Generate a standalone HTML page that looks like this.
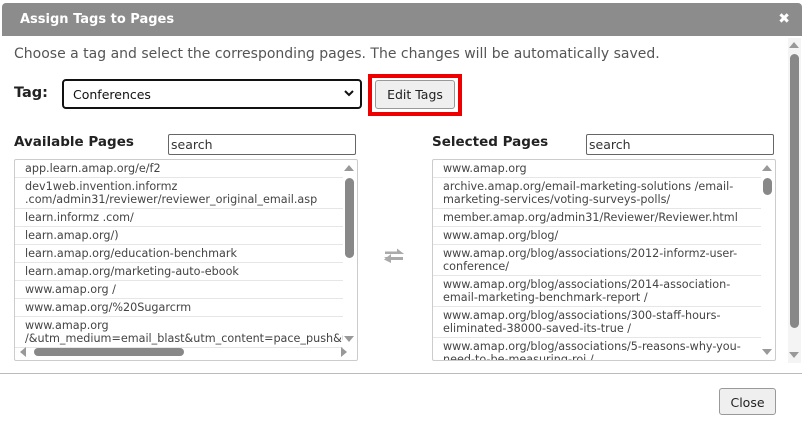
<!DOCTYPE html>
<html><head><style>
*{box-sizing:border-box;margin:0;padding:0}
body{width:804px;height:433px;background:#fff;font-family:"DejaVu Sans","Liberation Sans",sans-serif;position:relative;overflow:hidden;color:#333}
.title{position:absolute;left:2px;top:3px;width:800px;height:33px;background:#8c8c8c;border-radius:4px 4px 0 0;color:#fff;font-weight:bold;font-size:13px;padding:9px 0 0 18px}
.x{position:absolute;right:12px;top:8px;font-size:14px}
.abs{position:absolute}
.desc{left:14px;top:46px;font-size:14px;color:#555;white-space:nowrap}
.lbl{font-weight:bold;font-size:13.5px;color:#222}
.sel{left:62px;top:79px;width:300px;height:30px;border:2px solid #111;border-radius:4px;font-size:12.5px;padding:6px 0 0 9px;color:#111}
.red{left:368px;top:74px;width:94px;height:42px;border:4px solid #e00}
.btn{background:#efefef;border:1px solid #999;border-radius:3px;font-size:12.5px;color:#222;text-align:center}
.search{height:21px;border:1px solid #666;border-radius:2px;font-size:12.5px;padding:2px 0 0 2px;color:#333}
.list{border:1px solid #ccc;border-radius:2px;overflow:hidden;background:#fff}
.row{border-bottom:1px solid #e6e6e6;font-size:11.2px;line-height:13px;padding:2px 0 2px 10px;white-space:nowrap;color:#444;height:18px}
.row.d{height:31px}
.vs{position:absolute;right:3px;width:9px;border-radius:5px;background:#888}
.tri{position:absolute;width:0;height:0;border-left:5px solid transparent;border-right:5px solid transparent}
</style></head><body>
<div class="title">Assign Tags to Pages<span class="x">✖</span></div>
<div class="abs desc">Choose a tag and select the corresponding pages. The changes will be automatically saved.</div>
<div class="abs lbl" style="left:14px;top:85px;font-size:14.5px">Tag:</div>
<div class="abs sel">Conferences<svg style="position:absolute;right:6px;top:9px" width="10" height="7"><path d="M1 1l4 4 4-4" stroke="#111" stroke-width="2" fill="none"/></svg></div>
<div class="abs red"></div>
<div class="abs btn" style="left:375px;top:80px;width:80px;height:29px;padding-top:6px">Edit Tags</div>
<div class="abs lbl" style="left:14px;top:134px">Available Pages</div>
<div class="abs search" style="left:168px;top:134px;width:188px">search</div>
<div class="abs lbl" style="left:432px;top:134px">Selected Pages</div>
<div class="abs search" style="left:586px;top:134px;width:188px">search</div>

<div class="abs list" style="left:14px;top:159px;width:344px;height:202px">
<div style="width:328px;overflow:hidden">
<div class="row">app.learn.amap.org/e/f2</div>
<div class="row d">dev1web.invention.informz<br>.com/admin31/reviewer/reviewer_original_email.asp</div>
<div class="row">learn.informz .com/</div>
<div class="row">learn.amap.org/)</div>
<div class="row">learn.amap.org/education-benchmark</div>
<div class="row">learn.amap.org/marketing-auto-ebook</div>
<div class="row">www.amap.org /</div>
<div class="row">www.amap.org/%20Sugarcrm</div>
<div class="row d" style="overflow:hidden">www.amap.org<br>/&amp;utm_medium=email_blast&amp;utm_content=pace_push&amp;utm</div>
</div>
<div class="vs" style="top:18px;height:80px"></div>
<div class="tri" style="right:3px;top:5px;border-bottom:6px solid #999"></div>
<div class="tri" style="right:3px;top:176px;border-top:6px solid #999"></div>
<div style="position:absolute;left:19px;top:188px;width:150px;height:8px;border-radius:4px;background:#888"></div>
<div class="tri" style="left:5px;top:187px;border:5px solid transparent;border-right:6px solid #999;border-left:0"></div>
<div class="tri" style="left:326px;top:187px;border:5px solid transparent;border-left:6px solid #999;border-right:0"></div>
</div>

<svg class="abs" style="left:382px;top:248px" width="24" height="16"><path d="M3 4h12V1l7 5-7 0H3z M21 10H9v4L2 9h19z" fill="#aaa"/><path d="M3 3.5h12V0.5l7 5.5H3z" fill="#aaa"/><path d="M21 9H9V6L2 11.5 9 15v-3h12z" fill="#aaa"/></svg>

<div class="abs list" style="left:432px;top:159px;width:344px;height:202px">
<div style="width:328px;overflow:hidden">
<div class="row">www.amap.org</div>
<div class="row d">archive.amap.org/email-marketing-solutions /email-<br>marketing-services/voting-surveys-polls/</div>
<div class="row">member.amap.org/admin31/Reviewer/Reviewer.html</div>
<div class="row">www.amap.org/blog/</div>
<div class="row d">www.amap.org/blog/associations/2012-informz-user-<br>conference/</div>
<div class="row d">www.amap.org/blog/associations/2014-association-<br>email-marketing-benchmark-report /</div>
<div class="row d">www.amap.org/blog/associations/300-staff-hours-<br>eliminated-38000-saved-its-true /</div>
<div class="row d">www.amap.org/blog/associations/5-reasons-why-you-<br>need-to-be-measuring-roi /</div>
</div>
<div class="vs" style="top:18px;height:17px"></div>
<div class="tri" style="right:3px;top:5px;border-bottom:6px solid #999"></div>
<div class="tri" style="right:3px;top:189px;border-top:6px solid #999"></div>
</div>

<div class="abs" style="left:788px;top:38px;width:13px;height:325px;background:#f4f4f4"></div>
<div class="abs tri" style="left:789px;top:42px;border-bottom:6px solid #999"></div>
<div class="abs" style="left:790px;top:54px;width:9px;height:274px;border-radius:5px;background:#888"></div>
<div class="abs tri" style="left:789px;top:352px;border-top:6px solid #999"></div>

<div class="abs" style="left:0;top:373px;width:802px;height:1px;background:#bbb"></div>
<div class="abs btn" style="left:719px;top:388px;width:57px;height:27px;padding-top:6px">Close</div>
</body></html>
